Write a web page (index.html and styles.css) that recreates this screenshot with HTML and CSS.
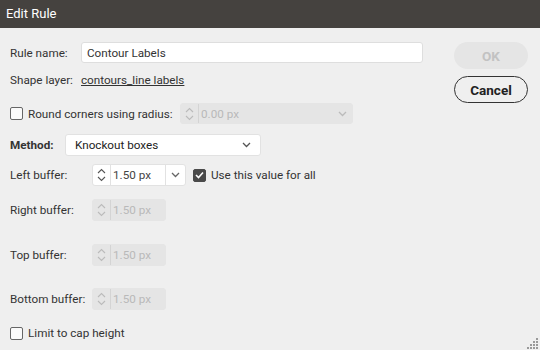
FILE: index.html
```html
<!DOCTYPE html>
<html lang="en">
<head>
    <meta charset="UTF-8">
    <meta name="viewport" content="width=device-width, initial-scale=1.0">
    <title>Edit Rule</title>
    <link rel="stylesheet" href="styles.css">
</head>
<body>
    <div class="dialog">
        <div class="title-bar">Edit Rule</div>
        <div class="dialog-body">
            <div class="form">
                <div class="row row-name">
                    <span class="label">Rule name:</span>
                    <div class="text-input">Contour Labels</div>
                </div>
                <div class="row row-layer">
                    <span class="label">Shape layer:</span>
                    <span class="link">contours_line labels</span>
                </div>
                <div class="row row-round">
                    <span class="checkbox"></span>
                    <span class="check-label">Round corners using radius:</span>
                    <div class="spinner disabled wide">
                        <span class="arrows">
                            <svg width="9" height="14" viewBox="0 0 9 14"><path d="M1 5 L4.5 1.5 L8 5 M1 9 L4.5 12.5 L8 9" fill="none" stroke="currentColor" stroke-width="1.1"/></svg>
                        </span>
                        <span class="value">0.00 px</span>
                        <span class="chevron">
                            <svg width="9" height="6" viewBox="0 0 9 6"><path d="M1 1 L4.5 4.5 L8 1" fill="none" stroke="currentColor" stroke-width="1.3"/></svg>
                        </span>
                    </div>
                </div>
                <div class="row row-method">
                    <span class="label bold">Method:</span>
                    <div class="select">
                        <span>Knockout boxes</span>
                        <svg width="9" height="6" viewBox="0 0 9 6"><path d="M1 1 L4.5 4.5 L8 1" fill="none" stroke="currentColor" stroke-width="1.3"/></svg>
                    </div>
                </div>
                <div class="row row-left">
                    <span class="label buffer-label">Left buffer:</span>
                    <div class="spinner">
                        <span class="arrows">
                            <svg width="9" height="14" viewBox="0 0 9 14"><path d="M1 5 L4.5 1.5 L8 5 M1 9 L4.5 12.5 L8 9" fill="none" stroke="currentColor" stroke-width="1.1"/></svg>
                        </span>
                        <span class="value">1.50 px</span>
                        <span class="chevron sep">
                            <svg width="9" height="6" viewBox="0 0 9 6"><path d="M1 1 L4.5 4.5 L8 1" fill="none" stroke="currentColor" stroke-width="1.3"/></svg>
                        </span>
                    </div>
                    <span class="checkbox checked">
                        <svg width="9" height="8" viewBox="0 0 9 8"><path d="M1 4 L3.5 6.5 L8 1.5" fill="none" stroke="#fff" stroke-width="1.6"/></svg>
                    </span>
                    <span class="check-label">Use this value for all</span>
                </div>
                <div class="row row-right">
                    <span class="label buffer-label">Right buffer:</span>
                    <div class="spinner disabled">
                        <span class="arrows">
                            <svg width="9" height="14" viewBox="0 0 9 14"><path d="M1 5 L4.5 1.5 L8 5 M1 9 L4.5 12.5 L8 9" fill="none" stroke="currentColor" stroke-width="1.1"/></svg>
                        </span>
                        <span class="value">1.50 px</span>
                    </div>
                </div>
                <div class="row row-top">
                    <span class="label buffer-label">Top buffer:</span>
                    <div class="spinner disabled">
                        <span class="arrows">
                            <svg width="9" height="14" viewBox="0 0 9 14"><path d="M1 5 L4.5 1.5 L8 5 M1 9 L4.5 12.5 L8 9" fill="none" stroke="currentColor" stroke-width="1.1"/></svg>
                        </span>
                        <span class="value">1.50 px</span>
                    </div>
                </div>
                <div class="row row-bottom">
                    <span class="label buffer-label">Bottom buffer:</span>
                    <div class="spinner disabled">
                        <span class="arrows">
                            <svg width="9" height="14" viewBox="0 0 9 14"><path d="M1 5 L4.5 1.5 L8 5 M1 9 L4.5 12.5 L8 9" fill="none" stroke="currentColor" stroke-width="1.1"/></svg>
                        </span>
                        <span class="value">1.50 px</span>
                    </div>
                </div>
                <div class="row row-cap">
                    <span class="checkbox"></span>
                    <span class="check-label">Limit to cap height</span>
                </div>
            </div>
            <div class="buttons">
                <button class="btn btn-ok" disabled>OK</button>
                <button class="btn btn-cancel">Cancel</button>
            </div>
        </div>
        <svg class="grip" width="12" height="12" viewBox="0 0 12 12">
            <rect x="9" y="1" width="2" height="2" fill="#999"/>
            <rect x="6" y="4" width="2" height="2" fill="#999"/>
            <rect x="9" y="4" width="2" height="2" fill="#999"/>
            <rect x="3" y="7" width="2" height="2" fill="#999"/>
            <rect x="6" y="7" width="2" height="2" fill="#999"/>
            <rect x="9" y="7" width="2" height="2" fill="#999"/>
            <rect x="0" y="10" width="2" height="2" fill="#999"/>
            <rect x="3" y="10" width="2" height="2" fill="#999"/>
            <rect x="6" y="10" width="2" height="2" fill="#999"/>
            <rect x="9" y="10" width="2" height="2" fill="#999"/>
        </svg>
    </div>
</body>
</html>
```

FILE: styles.css
```css
body {
    margin: 0;
    font-family: Roboto, "Open Sans", sans-serif;
    font-size: 11.7px;
    color: #333;
    background-color: #efefef;
}
.dialog {
    position: relative;
    width: 540px;
    height: 350px;
    background-color: #efefef;
    overflow: hidden;
}
.title-bar {
    height: 28px;
    line-height: 27px;
    padding-left: 6px;
    background-color: #45423f;
    color: #fff;
    font-size: 13px;
}
.dialog-body {
    display: flex;
    padding: 14px 12px 0 10px;
}
.form {
    flex: 1;
}
.row {
    display: flex;
    align-items: center;
}
.label {
    white-space: nowrap;
}
.bold {
    font-weight: bold;
}
.buffer-label {
    width: 82px;
}
.row-name {
    height: 21px;
}
.row-name .label {
    width: 71px;
}
.text-input {
    width: 342px;
    height: 21px;
    line-height: 20px;
    padding-left: 5px;
    box-sizing: border-box;
    background-color: #fff;
    border: 1px solid #dedede;
    border-radius: 3px;
}
.row-layer {
    height: 20px;
    margin-top: 7px;
}
.row-layer .label {
    width: 71px;
}
.link {
    text-decoration: underline;
    color: #333;
}
.row-round {
    height: 21px;
    margin-top: 13px;
}
.checkbox {
    display: flex;
    align-items: center;
    justify-content: center;
    width: 13px;
    height: 13px;
    box-sizing: border-box;
    border: 1px solid #666;
    border-radius: 2px;
    background-color: #fafafa;
    margin-right: 5px;
    flex-shrink: 0;
}
.checkbox.checked {
    background-color: #4a4a4a;
    border-color: #4a4a4a;
    margin-left: 7px;
}
.check-label {
    white-space: nowrap;
}
.row-round .check-label {
    width: 152px;
}
.spinner {
    display: flex;
    align-items: stretch;
    width: 94px;
    height: 22px;
    box-sizing: border-box;
    background-color: #fff;
    border: 1px solid #e2e2e2;
    border-radius: 3px;
    color: #444;
}
.spinner .arrows {
    display: flex;
    align-items: center;
    justify-content: center;
    width: 17px;
    border-right: 1px solid #e2e2e2;
    color: #555;
}
.spinner .value {
    flex: 1;
    display: flex;
    align-items: center;
    padding-left: 2px;
}
.spinner .chevron {
    display: flex;
    align-items: center;
    justify-content: center;
    width: 19px;
    color: #666;
}
.spinner .chevron.sep {
    border-left: 1px solid #e2e2e2;
}
.spinner.disabled {
    width: 74px;
    background-color: #e5e5e5;
    border-color: #e5e5e5;
    color: #b9b9b9;
}
.spinner.disabled .arrows {
    color: #bbb;
    border-right-color: #d4d4d4;
}
.spinner.disabled .chevron {
    color: #bbb;
}
.spinner.wide {
    width: 173px;
    height: 21px;
}
.row-method {
    height: 22px;
    margin-top: 10px;
}
.row-method .label {
    width: 55px;
}
.select {
    display: flex;
    align-items: center;
    justify-content: space-between;
    width: 196px;
    height: 22px;
    box-sizing: border-box;
    padding: 0 9px;
    background-color: #fff;
    border: 1px solid #e2e2e2;
    border-radius: 3px;
    color: #222;
}
.select svg {
    color: #555;
}
.row-left {
    height: 22px;
    margin-top: 8px;
}
.row-right {
    height: 22px;
    margin-top: 13px;
}
.row-top {
    height: 22px;
    margin-top: 23px;
}
.row-bottom {
    height: 22px;
    margin-top: 22px;
}
.row-cap {
    height: 20px;
    margin-top: 13px;
}
.buttons {
    display: flex;
    flex-direction: column;
    width: 74px;
}
.btn {
    width: 74px;
    height: 27px;
    border-radius: 14px;
    font-family: Roboto, "Open Sans", sans-serif;
    font-size: 13.5px;
    font-weight: bold;
    padding: 0;
    box-sizing: border-box;
}
.btn-ok {
    background-color: #e5e5e5;
    color: #c2c2c2;
    border: none;
}
.btn-cancel {
    margin-top: 7px;
    background-color: #efefef;
    color: #222;
    border: 1.5px solid #333;
    cursor: pointer;
}
.grip {
    position: absolute;
    right: 1px;
    bottom: 1px;
}
```
